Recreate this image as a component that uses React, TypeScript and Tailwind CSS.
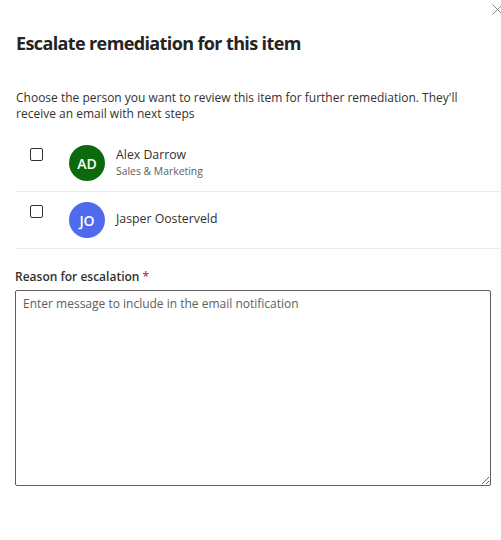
import React from "react";

function Person({ initials, color, name, sub }: { initials: string; color: string; name: string; sub?: string }) {
  return (
    <div className="flex items-start h-[57px] border-b border-[#edebe9] ml-[15px]">
      <div className="w-[54px] pt-[13px] pl-[15px]">
        <div className="w-[13px] h-[13px] border border-[#323130] rounded-[2px]" />
      </div>
      <div className="pt-[10px]">
        <div
          className={`w-[36px] h-[36px] rounded-full flex items-center justify-center text-white text-[14px] font-semibold ${color}`}
        >
          {initials}
        </div>
      </div>
      <div className={`ml-[11px] flex flex-col ${sub ? "pt-[12px]" : "pt-[19px]"}`}>
        <div className="text-[12.3px] leading-[16px] text-[#323130]">{name}</div>
        {sub && <div className="text-[10.4px] leading-[16px] text-[#605e5c]">{sub}</div>}
      </div>
    </div>
  );
}

export default function App() {
  return (
    <div
      className="w-[501px] h-[540px] bg-white relative text-[#323130]"
      style={{ fontFamily: '"Open Sans", "Noto Sans", sans-serif' }}
    >
      <button className="absolute left-[491px] top-[3px] w-[12px] h-[12px] flex items-center justify-center">
        <svg width="11" height="11" viewBox="0 0 11 11">
          <path d="M0.5 0.5 L10.5 10.5 M10.5 0.5 L0.5 10.5" stroke="#8a8886" strokeWidth="1" />
        </svg>
      </button>
      <div className="pt-[30px] pl-[16px]">
        <h1 className="text-[18px] leading-[26px] font-bold tracking-[-0.62px] text-[#242424]">
          Escalate remediation for this item
        </h1>
      </div>
      <div className="pl-[16px] pr-[30px] pt-[34px] text-[12px] leading-[16px] text-[#323130]">
        Choose the person you want to review this item for further remediation. They'll receive an email with next steps
      </div>
      <div className="mt-[13px]">
        <Person initials="AD" color="bg-[#0b6a0b]" name="Alex Darrow" sub="Sales & Marketing" />
        <Person initials="JO" color="bg-[#4f6bed]" name="Jasper Oosterveld" />
      </div>
      <div className="pl-[15px] pt-[18px] pr-[10px]">
        <label className="block text-[12px] leading-[20px] font-semibold text-[#323130]">
          Reason for escalation <span className="text-[#c4314b]">*</span>
        </label>
        <textarea
          className="mt-[3px] block w-full h-[196px] border border-[#605e5c] rounded-[2px] px-[7px] pt-[3px] text-[12px] leading-[20px] outline-none resize-y placeholder:text-[#605e5c]"
          placeholder="Enter message to include in the email notification"
        />
      </div>
    </div>
  );
}
